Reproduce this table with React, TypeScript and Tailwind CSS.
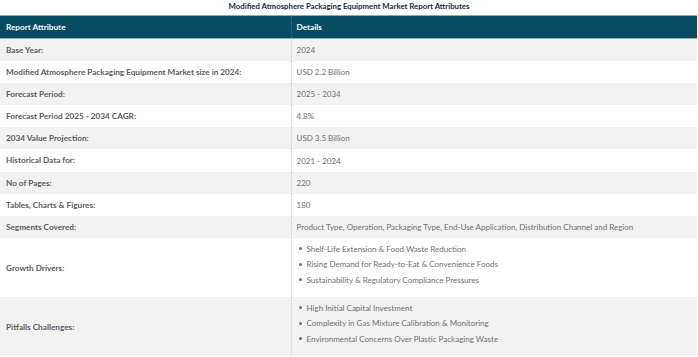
const rows: { label: string; value: string | string[] }[] = [
  { label: "Base Year:", value: "2024" },
  { label: "Modified Atmosphere Packaging Equipment Market size in 2024:", value: "USD 2.2 Billion" },
  { label: "Forecast Period:", value: "2025 - 2034" },
  { label: "Forecast Period 2025 - 2034 CAGR:", value: "4.8%" },
  { label: "2034 Value Projection:", value: "USD 3.5 Billion" },
  { label: "Historical Data for:", value: "2021 - 2024" },
  { label: "No of Pages:", value: "220" },
  { label: "Tables, Charts & Figures:", value: "180" },
  {
    label: "Segments Covered:",
    value: "Product Type, Operation, Packaging Type, End-Use Application, Distribution Channel and Region",
  },
  {
    label: "Growth Drivers:",
    value: [
      "Shelf-Life Extension & Food Waste Reduction",
      "Rising Demand for Ready-to-Eat & Convenience Foods",
      "Sustainability & Regulatory Compliance Pressures",
    ],
  },
  {
    label: "Pitfalls Challenges:",
    value: [
      "High Initial Capital Investment",
      "Complexity in Gas Mixture Calibration & Monitoring",
      "Environmental Concerns Over Plastic Packaging Waste",
    ],
  },
];

export default function App() {
  return (
    <div className="w-[698px] h-[357px] overflow-hidden bg-white font-['Lato',sans-serif]">
      <h2 className="h-[15px] pt-[1px] text-center text-[7.8px] leading-[10px] font-bold text-[#0f2d40]">
        Modified Atmosphere Packaging Equipment Market Report Attributes
      </h2>
      <table className="w-[697px] border-collapse table-fixed">
        <colgroup>
          <col className="w-[291px]" />
          <col />
        </colgroup>
        <thead>
          <tr className="h-[23px] bg-[#064d63] border-y border-[#9aa5aa] text-white text-[8.2px] font-bold">
            <th className="text-left px-[6px] py-0">Report Attribute</th>
            <th className="text-left px-[5px] py-0 border-l border-dotted border-[#3d7284]">Details</th>
          </tr>
        </thead>
        <tbody>
          {rows.map((row, i) => (
            <tr key={row.label} className={i % 2 === 0 ? "bg-[#f2f2f2]" : "bg-white"}>
              <td
                className={`px-[6px] text-[8.2px] font-bold text-[#585d61] ${
                  Array.isArray(row.value) ? "h-[59px]" : "h-[22.2px]"
                }`}
              >
                {row.label}
              </td>
              <td className="px-[5px] text-[8px] text-[#6e7174] border-l border-dotted border-[#cfcfcf]">
                {Array.isArray(row.value) ? (
                  <ul className="pt-[2px] pb-[9px]">
                    {row.value.map((item) => (
                      <li key={item} className="flex items-center gap-[5px] h-[15.5px]">
                        <span className="w-[3px] h-[3px] rounded-full bg-[#6e7174] ml-[2px]" />
                        {item}
                      </li>
                    ))}
                  </ul>
                ) : (
                  row.value
                )}
              </td>
            </tr>
          ))}
        </tbody>
      </table>
    </div>
  );
}
